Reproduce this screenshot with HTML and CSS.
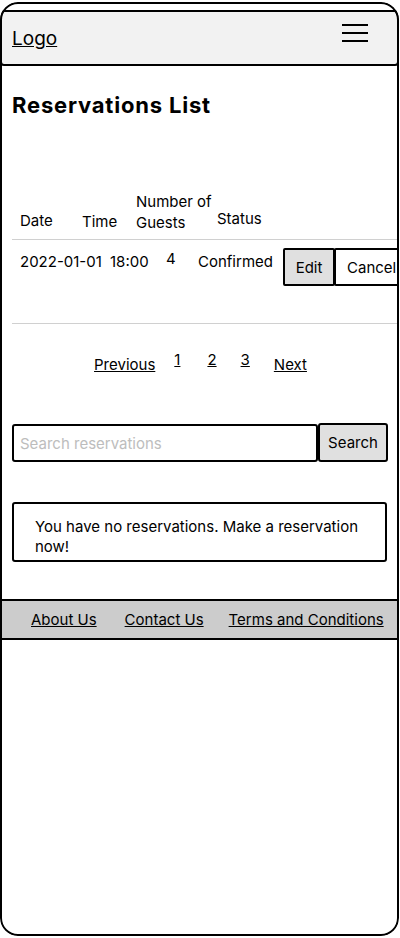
FILE: index.html
```html
<!DOCTYPE html>
<html lang="en">
<head>
<meta charset="utf-8">
<title>Reservations List</title>
<link rel="stylesheet" href="styles.css">
</head>
<body>
<div class="device">
  <header class="topbar">
    <a class="logo" href="#">Logo</a>
    <span class="burger" aria-label="Menu"><i></i><i></i><i></i></span>
  </header>
  <main class="content">
    <h1 class="title">Reservations List</h1>
    <div class="table">
      <div class="thead">
        <div class="cell h-date">Date</div>
        <div class="cell h-time">Time</div>
        <div class="cell h-guests">Number of<br>Guests</div>
        <div class="cell h-status">Status</div>
      </div>
      <div class="trow">
        <div class="cell r-date">2022-01-01</div>
        <div class="cell r-time">18:00</div>
        <div class="cell r-guests">4</div>
        <div class="cell r-status">Confirmed</div>
        <div class="actions">
          <button class="btn btn-edit" type="button">Edit</button>
          <button class="btn btn-cancel" type="button">Cancel</button>
        </div>
      </div>
    </div>
    <nav class="pager">
      <a class="pg-word pg-prev" href="#">Previous</a>
      <a class="pg-num pg-first" href="#">1</a>
      <a class="pg-num" href="#">2</a>
      <a class="pg-num" href="#">3</a>
      <a class="pg-word pg-next" href="#">Next</a>
    </nav>
    <form class="search" onsubmit="return false">
      <input class="search-input" type="text" placeholder="Search reservations">
      <button class="search-btn" type="button">Search</button>
    </form>
    <div class="notice">You have no reservations. Make a reservation now!</div>
  </main>
  <footer class="footer">
    <a class="f-link f-about" href="#">About Us</a>
    <a class="f-link f-contact" href="#">Contact Us</a>
    <a class="f-link f-terms" href="#">Terms and Conditions</a>
  </footer>
</div>
</body>
</html>
```
FILE: styles.css
```css
* { box-sizing: border-box; }
html, body { margin: 0; padding: 0; overflow: hidden; background: #fff; }
body {
  font-family: Inter, "Noto Sans", sans-serif;
  font-size: 15px;
  line-height: 20px;
  color: #000;
}
a { color: #000; text-decoration: underline; }

.device {
  position: relative;
  width: 399px;
  height: 934px;
  margin-top: 2px;
  border-radius: 18px;
  overflow: hidden;
  background: #fff;
}
.device::after {
  content: "";
  position: absolute;
  inset: 0;
  border: 2px solid #000;
  border-radius: 18px;
  pointer-events: none;
}

/* header */
.topbar {
  margin-top: 8px;
  height: 56px;
  background: #f2f2f2;
  border: 2px solid #000;
  border-radius: 4px;
  display: flex;
  justify-content: space-between;
  align-items: flex-start;
  padding: 0 29px 0 10px;
}
.logo {
  margin-top: 15px;
  font-size: 19px;
  line-height: 24px;
}
.burger {
  margin-top: 12px;
  width: 26px;
  display: flex;
  flex-direction: column;
  gap: 6px;
}
.burger i {
  display: block;
  height: 2px;
  background: #000;
}

/* content */
.content { padding: 0 12px; }
.title {
  margin: 27px 0 0;
  font-size: 22px;
  line-height: 25px;
  font-weight: 700;
  letter-spacing: 0.8px;
}

.table { margin: 73px -12px 0 0; }
.thead {
  display: flex;
  align-items: flex-start;
  padding: 0 0 6px 8px;
  border-bottom: 1px solid #d0d0d0;
  line-height: 21px;
}
.cell { white-space: nowrap; flex-shrink: 0; }
.h-date { width: 62px; margin-top: 19px; }
.h-time { width: 54px; margin-top: 20px; }
.h-guests { width: 81px; }
.h-status { margin-top: 17px; }

.trow {
  display: flex;
  align-items: flex-start;
  padding: 8px 0 37px 8px;
  border-bottom: 1px solid #d0d0d0;
  line-height: 21px;
}
.r-date { width: 90px; margin-top: 3px; }
.r-time { width: 56px; margin-top: 3px; }
.r-guests { width: 32px; }
.r-status { width: 85px; margin-top: 3px; }
.actions { display: flex; flex-shrink: 0; }
.btn {
  flex-shrink: 0;
  height: 38px;
  border: 2px solid #000;
  border-radius: 2px;
  font-family: inherit;
  font-size: 15px;
  color: #000;
  padding: 0;
}
.btn-edit { width: 52px; background: #e0e0e0; }
.btn-cancel { background: #fff; padding: 0 11px; margin-left: -1px; }

/* pager */
.pager {
  margin-top: 26px;
  padding-left: 2px;
  display: flex;
  justify-content: center;
  align-items: flex-start;
}
.pg-word { margin-top: 5px; }
.pg-prev { margin-right: 19px; }
.pg-num { margin-right: 24px; }
.pg-first { margin-right: 27px; }

/* search */
.search {
  margin: 48px 0 0;
  display: flex;
  align-items: flex-end;
}
.search-input {
  flex-shrink: 0;
  width: 306px;
  height: 38px;
  border: 2px solid #000;
  border-radius: 3px;
  padding: 0 6px;
  font-family: inherit;
  font-size: 15px;
  color: #000;
  outline: none;
}
.search-input::placeholder { color: #bdbdbd; }
.search-btn {
  flex-shrink: 0;
  width: 70px;
  height: 39px;
  border: 2px solid #000;
  border-radius: 3px;
  background: #e0e0e0;
  font-family: inherit;
  font-size: 15px;
  color: #000;
  padding: 0;
}

/* notice */
.notice {
  margin-top: 40px;
  height: 60px;
  border: 2px solid #000;
  border-radius: 3px;
  padding: 13px 21px 0;
}

/* footer */
.footer {
  margin-top: 37px;
  height: 41px;
  background: #cccccc;
  border-top: 2px solid #000;
  border-bottom: 2px solid #000;
  display: flex;
  align-items: flex-start;
  padding: 9px 0 0 31px;
}
.f-about { margin-right: 28px; }
.f-contact { margin-right: 25px; }
```
